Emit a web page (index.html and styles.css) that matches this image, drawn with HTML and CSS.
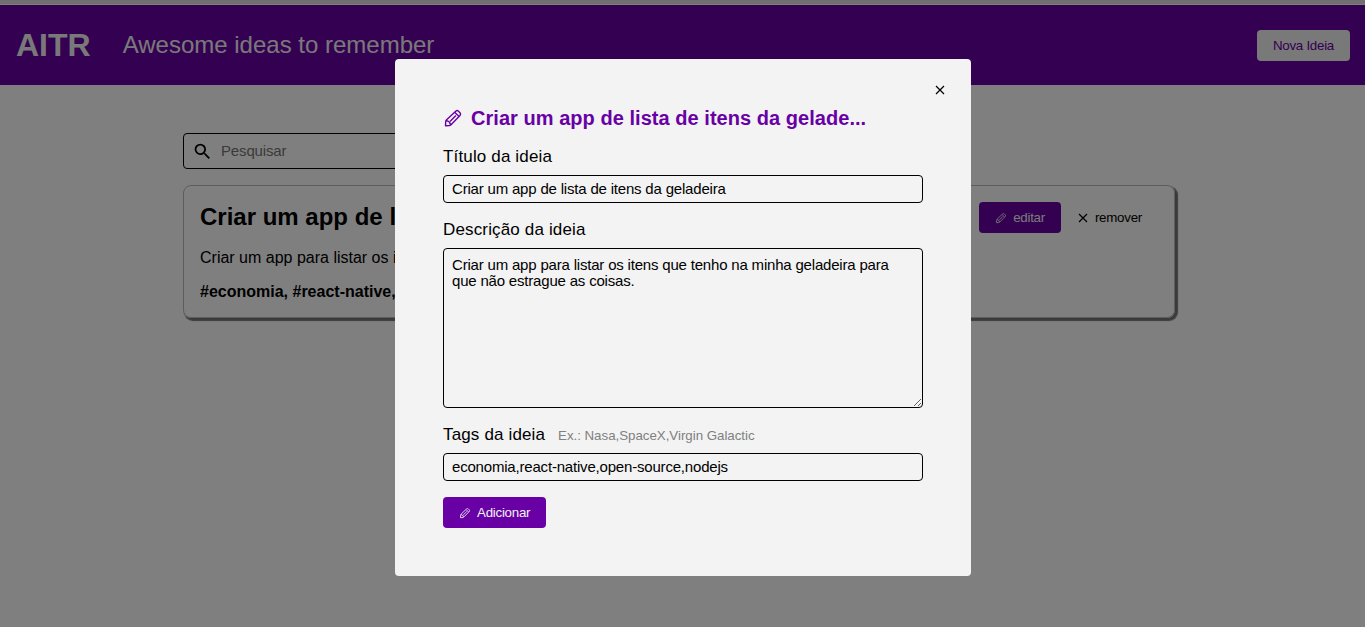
FILE: index.html
```
<!DOCTYPE html>
<html lang="pt-BR">
<head>
<meta charset="utf-8">
<title>AITR</title>
<link rel="stylesheet" href="styles.css">
</head>
<body>
<svg width="0" height="0" class="defs">
  <symbol id="pencil" viewBox="0 0 20 20">
    <path d="M2.500 17.800 2.700 13.600Q2.800 12.600 3.600 11.800L12.700 3.200Q14.200 2 15.500 3.200L17 4.700Q18.200 6 17 7.500L8.300 16.500Q7.600 17.300 6.600 17.500Z M11.900 4.400 15.800 8.300 M7 13.400 12.900 7.500 M3.400 12.600Q6.800 13.200 7.500 16.600" fill="none" stroke="currentColor" stroke-width="1.400" stroke-linejoin="round"/>
  </symbol>
  <symbol id="close" viewBox="0 0 10 10">
    <path d="M1 1 9 9M9 1 1 9" fill="none" stroke="currentColor" stroke-width="1.200"/>
  </symbol>
</svg>
<div class="strip"></div>
<header class="header">
  <h1 class="logo">AITR</h1>
  <p class="slogan">Awesome ideas to remember</p>
  <button class="btn btn-light">Nova Ideia</button>
</header>
<main class="main">
  <div class="search">
    <svg class="search-icon" viewBox="0 0 24 24"><path d="M15.500 14h-.79l-.28-.27A6.470 6.470 0 0 0 16 9.500 6.500 6.500 0 1 0 9.500 16c1.610 0 3.090-.59 4.230-1.570l.27.28v.79l5 4.990L20.490 19l-4.990-5zm-6 0C7.010 14 5 11.990 5 9.500S7.010 5 9.500 5 14 7.010 14 9.500 11.990 14 9.500 14z" fill="currentColor"/></svg>
    <input class="search-input" placeholder="Pesquisar">
  </div>
  <article class="card">
    <div class="card-body">
      <h2 class="card-title">Criar um app de lista</h2>
      <p class="card-text">Criar um app para listar os itens</p>
      <p class="card-tags">#economia, #react-native,</p>
    </div>
    <div class="card-actions">
      <button class="btn btn-primary"><svg class="icon-sm"><use href="#pencil"/></svg>editar</button>
      <button class="btn btn-plain"><svg class="icon-x"><use href="#close"/></svg>remover</button>
    </div>
  </article>
</main>
<div class="overlay">
  <form class="modal">
    <button type="button" class="close"><svg class="icon-x"><use href="#close"/></svg></button>
    <h2 class="modal-title"><svg class="icon-lg"><use href="#pencil"/></svg><span>Criar um app de lista de itens da gelade...</span></h2>
    <label class="label" for="title">Título da ideia</label>
    <input class="field" id="title" value="Criar um app de lista de itens da geladeira">
    <label class="label" for="desc">Descrição da ideia</label>
    <textarea class="field area" id="desc" spellcheck="false">Criar um app para listar os itens que tenho na minha geladeira para que não estrague as coisas.</textarea>
    <label class="label" for="tags">Tags da ideia <small class="hint">Ex.: Nasa,SpaceX,Virgin Galactic</small></label>
    <input class="field" id="tags" value="economia,react-native,open-source,nodejs">
    <button type="button" class="btn btn-primary submit"><svg class="icon-sm"><use href="#pencil"/></svg>Adicionar</button>
  </form>
</div>
</body>
</html>
```
FILE: styles.css
```
* { box-sizing: border-box; margin: 0; padding: 0; }
body {
  height: 627px;
  overflow: hidden;
  background: #fff;
  color: #000;
  font-family: "Liberation Sans", Arial, sans-serif;
}
button, input, textarea { font-family: inherit; color: inherit; }
.defs { position: absolute; }
.strip { height: 5px; background: #e0e0e0; border-bottom: 1px solid #fff; }
.header {
  display: flex;
  align-items: center;
  height: 80px;
  padding: 0 15px 0 16px;
  background: #6800a5;
  color: #f2f2f2;
}
.logo { font-size: 32px; line-height: 36px; }
.slogan { margin-left: 32px; font-size: 24px; line-height: 28px; }
.btn {
  display: flex;
  align-items: center;
  height: 31px;
  padding: 0 16px;
  border: 0;
  border-radius: 4px;
  font-size: 13.333px;
  letter-spacing: -.26px;
  white-space: nowrap;
}
.btn-light { margin-left: auto; background: #f2f2f2; color: #6800a5; }
.btn-primary { background: #6800a5; color: #f2f2f2; }
.btn-plain { padding-left: 17px; background: transparent; }
.main { width: 992px; margin: 48px 0 0 183px; }
.search {
  display: flex;
  align-items: center;
  width: 496px;
  height: 36px;
  padding: 0 8px;
  border: 1px solid #000;
  border-radius: 4px;
}
.search-icon { width: 21px; height: 21px; }
.search-input {
  flex: 1;
  margin-left: 8px;
  padding-bottom: 2px;
  border: 0;
  outline: 0;
  background: transparent;
  font-size: 15px;
  letter-spacing: -.15px;
}
.search-input::placeholder { color: #757575; }
.card {
  display: flex;
  justify-content: space-between;
  height: 133px;
  margin-top: 16px;
  padding: 16px;
  border: 1px solid #bbb;
  border-radius: 8px;
  box-shadow: 2px 2px 1px 1px #777;
}
.card-body { width: 400px; white-space: nowrap; overflow: hidden; }
.card-title { font-size: 24px; line-height: 30px; }
.card-text { margin-top: 17px; font-size: 16px; line-height: 18px; }
.card-tags { margin-top: 16px; font-size: 16px; line-height: 18px; font-weight: bold; }
.card-actions { display: flex; align-items: flex-start; }
.overlay {
  position: fixed;
  inset: 0;
  display: flex;
  justify-content: center;
  align-items: flex-start;
  padding: 59px 0 0 1px;
  background: rgba(0, 0, 0, .5);
}
.modal {
  position: relative;
  display: flex;
  flex-direction: column;
  width: 576px;
  height: 517px;
  padding: 46px 48px 48px;
  border-radius: 4px;
  background: #f3f3f3;
}
.close {
  position: absolute;
  top: 26px;
  right: 26px;
  display: flex;
  border: 0;
  background: transparent;
}
.modal-title {
  display: flex;
  align-items: center;
  height: 25px;
  color: #6800a5;
  font-size: 20px;
  letter-spacing: .04px;
  white-space: nowrap;
}
.modal-title span { padding-top: 1px; }
.icon-lg { width: 20px; height: 20px; margin: 1px 8px 0 0; }
.icon-sm { width: 12px; height: 12px; margin-right: 6px; }
.icon-x { width: 10px; height: 10px; margin: 0; }
.btn-plain .icon-x { margin-right: 7px; }
.label { height: 18px; margin: 18px 0 9px; font-size: 17px; line-height: 18px; letter-spacing: .15px; }
.hint { margin-left: 8px; font-size: 13.333px; letter-spacing: -.03px; color: #808080; }
.field {
  width: 480px;
  height: 28px;
  flex: none;
  padding: 0 8px 2px;
  border: 1px solid #000;
  border-radius: 4px;
  background: transparent;
  font-size: 15px;
  letter-spacing: -.19px;
}
.area { height: 160px; padding: 8px; line-height: 16px; }
.submit { align-self: flex-start; margin-top: 16px; }
```
